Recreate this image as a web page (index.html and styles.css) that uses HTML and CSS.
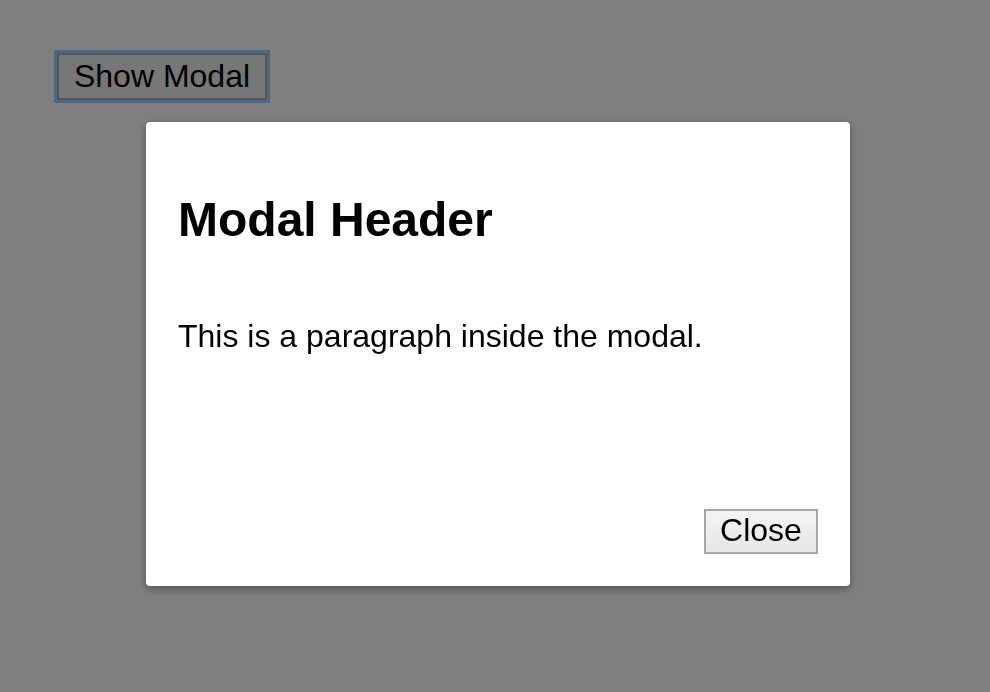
FILE: index.html
```html
<!DOCTYPE html>
<html>
<head>
<meta charset="utf-8">
<link rel="stylesheet" href="styles.css">
</head>
<body>
<div class="page">
  <button class="show-btn">Show Modal</button>
</div>
<div class="overlay">
  <div class="modal">
    <h2 class="modal-title">Modal Header</h2>
    <p class="modal-text">This is a paragraph inside the modal.</p>
    <div class="modal-footer">
      <button class="close-btn">Close</button>
    </div>
  </div>
</div>
</body>
</html>
```
FILE: styles.css
```css
html, body {
  margin: 0;
  padding: 0;
  height: 100%;
}
body {
  background: #ffffff;
  font-family: "Liberation Sans", Arial, sans-serif;
  color: #000;
}
.page {
  padding: 53px 0 0 57px;
}
.show-btn {
  font-family: "Liberation Sans", Arial, sans-serif;
  font-size: 32px;
  line-height: 37px;
  padding: 0;
  margin: 0;
  white-space: nowrap;
  background: #eeeeee;
  color: #000;
  border: 2px solid #acacac;
  border-radius: 0;
  outline: 3px solid #a0d0ff;
  outline-offset: 0;
  width: 210px;
  height: 47px;
}
.overlay {
  position: fixed;
  inset: 0;
  background: rgba(0, 0, 0, 0.5);
  display: flex;
  justify-content: flex-start;
  align-items: flex-start;
  padding: 122px 0 0 146px;
  box-sizing: border-box;
}
.modal {
  width: 704px;
  height: 464px;
  box-sizing: border-box;
  background: #ffffff;
  border-radius: 4px;
  box-shadow: 0 3px 8px rgba(0, 0, 0, 0.35);
  padding: 32px;
  display: flex;
  flex-direction: column;
}
.modal-title {
  font-size: 48px;
  font-weight: bold;
  margin: 37.8px 0 39.8px;
}
.modal-text {
  font-size: 32px;
  margin: 31px 0 32px;
}
.modal-footer {
  margin-top: auto;
  display: flex;
  justify-content: flex-end;
}
.close-btn {
  font-family: "Liberation Sans", Arial, sans-serif;
  font-size: 32px;
  line-height: 37px;
  padding: 0 0 3px;
  margin: 0;
  width: 114px;
  height: 45px;
  white-space: nowrap;
  background: linear-gradient(#f4f4f4, #e6e6e6);
  color: #000;
  border: 2px solid #a6a6a6;
  border-radius: 0;
}
```
